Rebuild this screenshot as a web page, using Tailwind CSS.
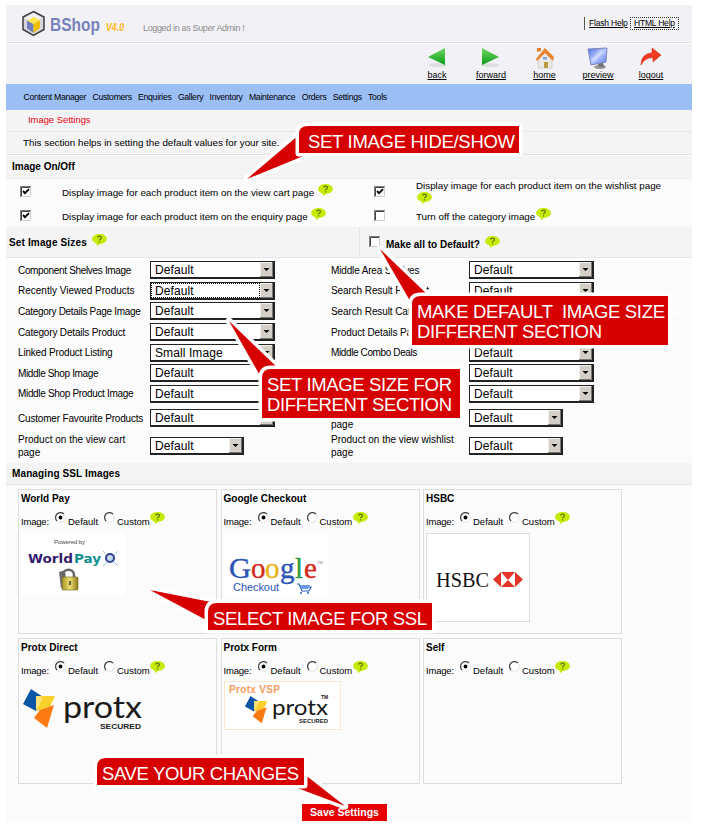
<!DOCTYPE html>
<html lang="en">
<head>
<meta charset="utf-8">
<title>BShop - Image Settings</title>
<script src="https://cdn.jsdelivr.net/npm/@tailwindcss/browser@4"></script>
</head>
<body class="bg-white w-[702px] h-[830px] overflow-hidden relative font-['Liberation_Sans',Arial,sans-serif] text-[9.8px] leading-[12px] text-black">

<svg class="absolute w-0 h-0">
  <defs>
    <linearGradient id="gr" x1="0" y1="0" x2="0" y2="1"><stop offset="0" stop-color="#6fd860"/><stop offset="1" stop-color="#0b9a1c"/></linearGradient>
    <linearGradient id="bl" x1="0" y1="0" x2="1" y2="1"><stop offset="0" stop-color="#4d6fe8"/><stop offset=".5" stop-color="#b9c9ff"/><stop offset="1" stop-color="#5577ee"/></linearGradient>
    <linearGradient id="gold" x1="0" y1="0" x2="1" y2="0"><stop offset="0" stop-color="#a8952a"/><stop offset=".5" stop-color="#f0e070"/><stop offset="1" stop-color="#8d7b18"/></linearGradient>
    <symbol id="bubble" viewBox="0 0 15 12"><ellipse cx="7.5" cy="5" rx="7.4" ry="5" fill="#c6ea00"/><path d="M4.5 8.5 L5 12 L9.5 9z" fill="#c6ea00"/><path d="M5.6 3.6 C5.8 1.6 9.6 1.6 9.4 3.8 C9.2 5.1 7.6 4.9 7.5 6.2 M7.5 7.2v1.2" fill="none" stroke="#587a10" stroke-width="1.2"/></symbol>
    <symbol id="box" viewBox="0 0 11 11"><rect width="11" height="11" fill="#fff"/><path d="M0 11V0h11" fill="none" stroke="#808080" stroke-width="2"/><path d="M1.5 10V1.5H10" fill="none" stroke="#404040"/><path d="M10.5 1v9.5H1" fill="none" stroke="#d0cdc6"/></symbol>
    <symbol id="boxon" viewBox="0 0 11 11"><use href="#box"/><path d="M3 5l2 2.2L9 3.2" fill="none" stroke="#000" stroke-width="1.9"/></symbol>
    <symbol id="radio" viewBox="0 0 11 11"><circle cx="5.5" cy="5.5" r="4.8" fill="#fff" stroke="#ddd" stroke-width=".8"/><path d="M2 9A4.8 4.8 0 0 1 9 2" fill="none" stroke="#444" stroke-width="1.2"/></symbol>
    <symbol id="radioon" viewBox="0 0 11 11"><use href="#radio"/><circle cx="5.5" cy="5.5" r="1.9" fill="#000"/></symbol>
    <symbol id="protx" viewBox="0 0 33 40"><path d="M8 0L20 8L13 22L0 15z" fill="#0a55a5"/><path d="M13 7L32 7L27 18L14 22z" fill="#f9d02c"/><path d="M17 21L31 16L24 39L11 29z" fill="#fb7a14"/><path d="M13 7L20 8L16 17L13 21z" fill="#fbe27a"/></symbol>
  </defs>
</svg>

<main class="mt-[5px] ml-[6px] w-[686px] h-[818px] bg-[#fbfbfb] flex flex-col">
  <header class="h-[38px] shrink-0 bg-[#f2f2f6] border-b border-[#e2e2e8] flex">
    <svg class="w-[25px] h-[27px] mt-[5px] ml-[15px]" viewBox="0 0 25 27"><path d="M12.5 1.5L23 7v12.5L12.5 25.5L2 19.5V7z" fill="#d5d7dc" stroke="#3c3c3c" stroke-width="1.5"/><path d="M12.5 3L21.5 8L12.5 12L3.5 8z" fill="#f1f1f1"/><path d="M6 10.5L12.5 14v9L6 18.5z" fill="#727fbd"/><path d="M6 10.5L13 7l6 3.2l-6.5 3.8z" fill="#ffe54b"/><path d="M12.5 14L19 10.5v7.5l-6.500 5z" fill="#edbf00"/></svg>
    <div class="ml-[4px] w-[55px] mt-[8px] text-[18px] leading-[22px] tracking-[-1px] font-bold text-[#7983bb]"><svg class="w-[52px] h-[24px]"><text x="0" y="18" font-size="19" textLength="50" lengthAdjust="spacingAndGlyphs" letter-spacing="0" fill="#7983bb">BShop</text></svg></div>
    <div class="w-[38px] mt-[16px]"><svg class="w-[24px] h-[14px]"><text x="1" y="10" textLength="18" lengthAdjust="spacingAndGlyphs" font-size="11" font-weight="bold" font-style="italic" fill="#fcb913">V4.0</text></svg></div>
    <div class="mt-[17px] w-[110px] whitespace-nowrap text-[9px] tracking-[-0.35px] text-[#8c8c8c]">Logged in as Super Admin !</div>
    <div class="ml-auto mr-[13px] mt-[12px] flex h-[13px] text-[8.5px] tracking-[-0.2px]">
      <div class="border-l border-[#555] pl-[4px] w-[46px] underline whitespace-nowrap">Flash Help</div>
      <div class="border border-dotted border-[#333] pl-[3px] w-[49px] leading-[11px] underline whitespace-nowrap">HTML Help</div>
    </div>
  </header>
  <div class="h-[41px] shrink-0 bg-[#f2f2f6] border-t border-white flex justify-end pr-[15px] text-[9px]">
    <div class="w-[54px] flex flex-col items-center pt-[3px]"><svg class="w-[22px] h-[22px]"><ellipse cx="12" cy="18" rx="9" ry="2" fill="#ddd"/><path d="M2 10L19 1V18z" fill="url(#gr)"/></svg><span class="underline">back</span></div>
    <div class="w-[54px] flex flex-col items-center pt-[3px]"><svg class="w-[22px] h-[22px]"><ellipse cx="10" cy="18" rx="9" ry="2" fill="#ddd"/><path d="M19 10L2 1V18z" fill="url(#gr)"/></svg><span class="underline">forward</span></div>
    <div class="w-[53px] flex flex-col items-center pt-[3px]"><svg class="w-[22px] h-[22px]"><path d="M4 9L11 4l7 6v11H4z" fill="#ece9e4" stroke="#bbb" stroke-width=".5"/><path d="M3 5V1h4v3zM2 12L11 1L20 10l-1 4L11 6L3 14z" fill="#e9812a"/><path d="M10 15h4v6h-4z" fill="#b99b42"/><path d="M9 10h4v2.500H9z" fill="#7fa5e8"/></svg><span class="underline">home</span></div>
    <div class="w-[54px] flex flex-col items-center pt-[3px]"><svg class="w-[24px] h-[22px]"><ellipse cx="14" cy="20" rx="6" ry="2" fill="#999"/><path d="M11 16l6-1l1 5h-5z" fill="#777"/><path d="M2 2L21 1L20 15L5 18z" fill="url(#bl)" stroke="#7a88b8"/><path d="M5 13L14 3l4 2L8 15z" fill="#fff" opacity=".3"/></svg><span class="underline">preview</span></div>
    <div class="w-[52px] flex flex-col items-center pt-[3px]"><svg class="w-[22px] h-[22px]"><path d="M1 18C1 10 6 6 12 6V1L21 8L13 15V11C8 10 4 13 1 18z" fill="#ef3c20" stroke="#d02010" stroke-width=".5"/></svg><span class="underline">logout</span></div>
  </div>
  <nav class="h-[26px] shrink-0 bg-[#9bbef5] flex items-center pl-[17.5px] gap-[6.3px] whitespace-nowrap text-[8.7px] tracking-[-0.3px]">
    <span>Content Manager</span><span>Customers</span><span>Enquiries</span><span>Gallery</span><span>Inventory</span><span>Maintenance</span><span>Orders</span><span>Settings</span><span>Tools</span>
  </nav>
  <div class="h-[22px] shrink-0 bg-[#f4f4f4] border-b border-[#e8e8e8] pl-[22px] pt-[4px] text-[9.4px] text-[#e00010]">Image Settings</div>
  <div class="h-[23px] shrink-0 bg-[#f4f4f4] border-b border-[#e2e2e2] pl-[17px] pt-[5px] whitespace-nowrap">This section helps in setting the default values for your site.</div>
  <div class="h-[23px] shrink-0 bg-[#f4f4f4] border-t border-white pl-[6px] pt-[5px] text-[10px] font-bold">Image On/Off</div>
  <section class="h-[49px] shrink-0 grid grid-cols-[354px_1fr] grid-rows-[25px_24px] border-t border-[#eee] whitespace-nowrap">
    <div class="flex pl-[14px] pt-[7px]"><svg class="w-[11px] h-[11px]"><use href="#boxon"/></svg><span class="ml-[31px] mt-px">Display image for each product item on the view cart page</span><svg class="w-[15px] h-[12px] ml-[4px] -mt-[2px]"><use href="#bubble"/></svg></div>
    <div class="flex pl-[14px] pt-[7px]"><svg class="w-[11px] h-[11px]"><use href="#boxon"/></svg><span class="ml-[31px] -mt-[6px] w-[250px] leading-[12px]">Display image for each product item on the wishlist page<svg class="w-[15px] h-[12px] ml-px"><use href="#bubble"/></svg></span></div>
    <div class="flex pl-[14px] pt-[6px]"><svg class="w-[11px] h-[11px]"><use href="#boxon"/></svg><span class="ml-[31px] mt-px">Display image for each product item on the enquiry page</span><svg class="w-[15px] h-[12px] ml-[3px] -mt-[2px]"><use href="#bubble"/></svg></div>
    <div class="flex pl-[14px] pt-[6px]"><svg class="w-[11px] h-[11px]"><use href="#box"/></svg><span class="ml-[31px] mt-px">Turn off the category image</span><svg class="w-[15px] h-[12px] ml-px -mt-[2px]"><use href="#bubble"/></svg></div>
  </section>
  <div class="h-[31px] shrink-0 bg-[#f4f4f4] border-b border-[#e6e6e6] flex text-[10px] tracking-[0.15px] font-bold whitespace-nowrap">
    <div class="w-[354px] border-r border-[#e8e8e8] flex pl-[3px] pt-[7px]"><span class="mt-[3px]">Set Image Sizes</span><svg class="w-[15px] h-[12px] ml-[5px]"><use href="#bubble"/></svg></div>
    <div class="flex pl-[9px] pt-[9px]"><svg class="w-[11px] h-[11px]"><use href="#box"/></svg><span class="ml-[6px] mt-[3px] tracking-normal">Make all to Default?</span><svg class="w-[15px] h-[12px] ml-[5px]"><use href="#bubble"/></svg></div>
  </div>
  <section id="sizes" class="h-[205px] shrink-0 pt-[2px] pl-[12px] grid content-start items-center grid-cols-[132px_181px_138px_1fr] grid-rows-[20.6px_20.6px_20.6px_20.6px_20.6px_20.6px_20.6px_28px_28px] text-[10px]"></section>
  <div class="h-[22px] shrink-0 bg-[#f4f4f4] border-b border-[#e6e6e6] pl-[6px] pt-[5px] text-[10px] tracking-[0.12px] font-bold">Managing SSL Images</div>
  <section id="cards" class="grid shrink-0 grid-cols-[199px_199px_199px] grid-rows-[145px_146px] gap-[3.500px] pt-[4px] pl-[12px]"></section>
  <div class="flex mt-[20px] pl-[296px]"><button class="bg-[#e60000] w-[85px] h-[17px] text-white font-bold text-[10.5px] leading-[17px] whitespace-nowrap">Save Settings</button></div>
</main>

<svg class="absolute left-0 top-0 w-[702px] h-[830px]" font-family="Liberation Sans, Arial, sans-serif" font-size="18.500" fill="#fff">
  <g fill="#d70000" stroke="#fff" stroke-width="7" paint-order="stroke" stroke-linejoin="round">
    <path d="M247 179L300 134L318 150z"/><path d="M299 153V134Q299 126 308 126H519V153z"/>
    <path d="M380 249L430 297L413 306z"/><path d="M412 345V304Q412 296 421 296H668V345z"/>
    <path d="M229 321L280 370L262 379z"/><path d="M262 418V378Q262 369 271 369H460V418z"/>
    <path d="M150 590L216 603L208 621z"/><path d="M208 630V612Q208 603 217 603H432V630z"/>
    <path d="M345 806L304 774L292 786z"/><path d="M97 785V767Q97 758 106 758H304V785z"/>
  </g>
  <text x="308" y="148" textLength="207">SET IMAGE HIDE/SHOW</text>
  <text x="417" y="318" textLength="248" xml:space="preserve">MAKE DEFAULT  IMAGE SIZE</text><text x="670" y="318">FO</text>
  <text x="417" y="338" textLength="185">DIFFERENT SECTION</text>
  <text x="267" y="391" textLength="185">SET IMAGE SIZE FOR</text>
  <text x="267" y="411" textLength="185">DIFFERENT SECTION</text>
  <text x="213" y="625" textLength="214">SELECT IMAGE FOR SSL</text>
  <text x="102" y="780" textLength="197">SAVE YOUR CHANGES</text>
</svg>

<script>
const select = (value, small, focus) => `
  <div class="${small ? 'w-[94px]' : 'w-[125px]'} h-[18px] bg-white border border-[#222] border-b-2 border-r-2 flex text-[12px] leading-[16px] tracking-[0.1px]">
    <span class="flex-1 pl-[4px] ${focus ? 'outline-1 outline-dotted -outline-offset-1 outline-black' : ''}">${value}</span>
    <svg class="w-[13px] h-[15px]"><rect width="13" height="15" fill="#d4d0c8"/><path d="M.5 15V.5H13" fill="none" stroke="#f4f2ee"/><path d="M12.5 0V14.500H0" fill="none" stroke="#777"/><path d="M3.500 6h6L6.500 9z" fill="#000"/></svg>
  </div>`;
// left label, its letter spacing, right label, its letter spacing
const rows = [
  ['Component Shelves Image', -0.33, 'Middle Area Shelves', -0.15],
  ['Recently Viewed Products', 0, 'Search Result Product', -0.1],
  ['Category Details Page Image', -0.3, 'Search Result Cat', -0.1],
  ['Category Details Product', -0.17, 'Product Details Pa', -0.1],
  ['Linked Product Listing', -0.18, 'Middle Combo Deals', -0.38],
  ['Middle Shop Image', -0.35, '', 0],
  ['Middle Shop Product Image', -0.33, '', 0],
  ['Customer Favourite Products', -0.18, '&nbsp;<br>page', 0],
  ['Product on the view cart<br>page', 0, 'Product on the view wishlist<br>page', 0],
];
document.getElementById('sizes').innerHTML = rows.map(([a, sa, b, sb], i) =>
  `<div class="whitespace-nowrap leading-[13px]" style="letter-spacing:${sa}px">${a}</div>${select(i === 4 ? 'Small Image' : 'Default', i === 8, i === 1)}
   <div class="whitespace-nowrap leading-[13px]" style="letter-spacing:${sb}px">${b}</div>${select('Default', i > 6, false)}`).join('');

const art = {
  'World Pay': `<svg class="w-[104px] h-[62px] mt-[6px]"><rect width="104" height="62" fill="#fff"/><text x="33" y="11" font-size="6" textLength="31" fill="#444">Powered by</text>
    <text x="7" y="30" font-size="12" font-weight="bold" font-family="DejaVu Sans" textLength="45" lengthAdjust="spacingAndGlyphs" fill="#33206e">World</text><text x="53" y="30" font-size="12" font-weight="bold" font-family="DejaVu Sans" textLength="27" lengthAdjust="spacingAndGlyphs" fill="#0d8f8c">Pay</text>
    <path d="M82 18L97 33M97 18L82 33" stroke="#9cc9dd"/><circle cx="89" cy="25" r="4" fill="#c7dcf0" stroke="#33408e" stroke-width="2"/>
    <path d="M38 39c6-3 8 2 6 7v9h-4z" fill="#333" opacity=".7"/><path d="M42 47v-5c0-7 11-7 11 0v5" fill="none" stroke="#666" stroke-width="2.500"/><rect x="41" y="44" width="16" height="13" rx="1" fill="url(#gold)" stroke="#6b6120" stroke-width=".6"/><path d="M49 48v4" stroke="#333" stroke-width="1.500"/></svg>`,
  'Google Checkout': `<svg class="w-[106px] h-[66px] mt-[6px]"><rect width="104" height="64" fill="#fff"/><g font-family="Liberation Serif" font-size="29" stroke-width=".4">
    <text x="5" y="45" fill="#2b55b5" stroke="#2b55b5" textLength="22" lengthAdjust="spacingAndGlyphs">G</text><text x="27" y="45" fill="#d22a1e" stroke="#d22a1e">o</text><text x="41" y="45" fill="#e8b317" stroke="#e8b317">o</text><text x="56" y="45" fill="#2b55b5" stroke="#2b55b5">g</text><text x="71" y="45" fill="#2f9e3f" stroke="#2f9e3f">l</text><text x="80" y="45" fill="#d22a1e" stroke="#d22a1e">e</text></g>
    <text x="9" y="58" font-size="11" textLength="46" fill="#2b55b5">Checkout</text><path d="M73 51h2l3 7h7l2-4H76" fill="none" stroke="#2b65c5" stroke-width="1.200"/><path d="M76 52h10l-2 4h-7z" fill="#6b9be5"/><circle cx="77" cy="60" r="1" fill="#2b65c5"/><circle cx="84" cy="60" r="1" fill="#2b65c5"/><text x="93" y="31" font-size="4" fill="#888">TM</text></svg>`,
  'HSBC': `<svg class="w-[104px] h-[89px] mt-[6px]"><rect x=".5" y=".5" width="103" height="88" fill="#fff" stroke="#ddd"/><text x="10" y="54" font-family="Liberation Serif" font-size="22" textLength="53" lengthAdjust="spacingAndGlyphs" fill="#111">HSBC</text>
    <path d="M75 39H89L82 47zM75 54H89L82 47zM75 39V54L67 46.500zM89 39V54L97 46.500z" fill="#e33427"/></svg>`,
  'Protx Direct': `<svg class="w-[126px] h-[52px] mt-[7px]"><use href="#protx" x="2" y="6" width="33" height="40"/><text x="42" y="35" font-family="Lato" font-size="31" textLength="79" lengthAdjust="spacingAndGlyphs" fill="#1a1a1a">protx</text><text x="79" y="46" font-size="8" font-weight="bold" textLength="41" lengthAdjust="spacingAndGlyphs" fill="#222">SECURED</text></svg>`,
  'Protx Form': `<svg class="w-[118px] h-[50px] mt-[5px]"><rect x=".5" y=".5" width="116" height="48" fill="#fff" stroke="#f8e8cc"/><text x="5" y="12" font-size="10" font-weight="bold" textLength="51" fill="#f79a5c">Protx VSP</text><use href="#protx" x="20" y="15" width="25" height="28"/><text x="48" y="34" font-family="Lato" font-size="22" textLength="56" lengthAdjust="spacingAndGlyphs" fill="#1a1a1a">protx</text><text x="75" y="42" font-size="6" font-weight="bold" textLength="29" lengthAdjust="spacingAndGlyphs" fill="#222">SECURED</text><text x="97" y="18" font-size="5" fill="#222" font-weight="bold">TM</text></svg>`,
  'Self': '',
};
document.getElementById('cards').innerHTML = Object.entries(art).map(([name, pic]) => `
  <div class="border border-[#ddd] pl-[2px] pt-[3px] flex flex-col items-start overflow-hidden">
    <b class="text-[10px]">${name}</b>
    <div class="flex mt-[7px] whitespace-nowrap h-[15px] text-[9.5px]">
      <span class="w-[34px] mt-[4px] tracking-[-0.2px]">Image:</span><svg class="w-[11px] h-[11px]"><use href="#radioon"/></svg>
      <span class="ml-[2px] w-[36px] mt-[4px]">Default</span><svg class="w-[11px] h-[11px]"><use href="#radio"/></svg>
      <span class="ml-[2px] w-[33px] mt-[4px]">Custom</span><svg class="w-[15px] h-[12px]"><use href="#bubble"/></svg>
    </div>
    ${pic}
  </div>`).join('');
</script>
</body>
</html>
